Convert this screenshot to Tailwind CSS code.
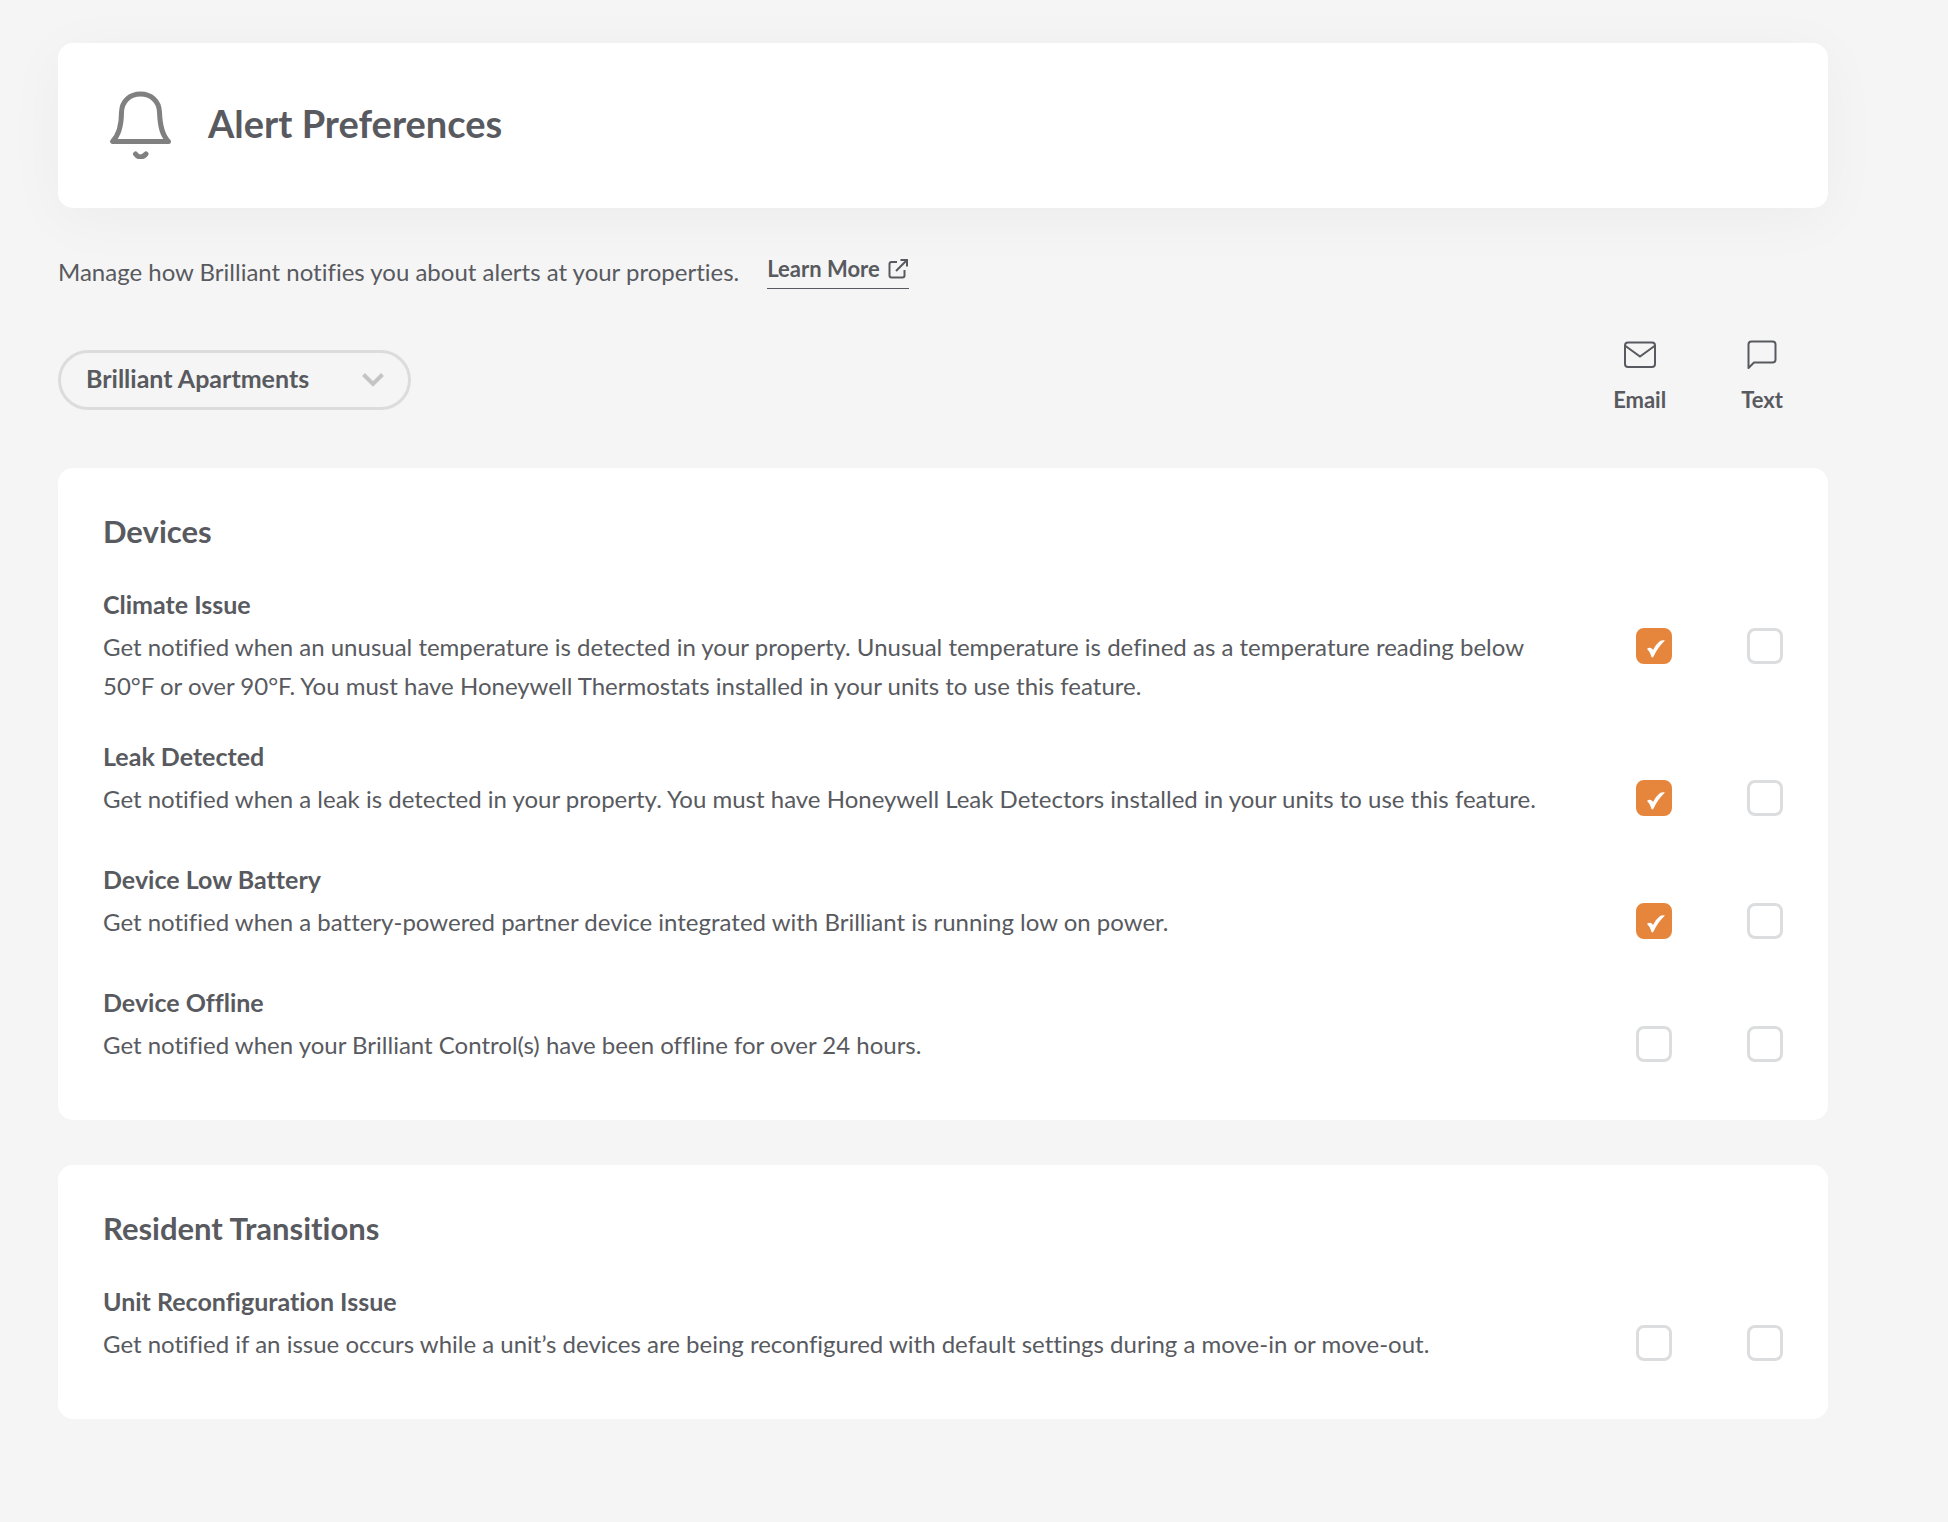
<!DOCTYPE html>
<html lang="en">

<head>
    <meta charset="UTF-8" />
    <meta name="viewport" content="width=device-width, initial-scale=1" />
    <title>Alert Preferences</title>
    <script src="https://cdn.jsdelivr.net/npm/@tailwindcss/browser@4"></script>
</head>

<body class="min-h-screen bg-[#f5f5f5] font-['Lato',sans-serif] text-[24px] leading-[39px] text-[#585a60] [font-variant-ligatures:none]">
    <main class="pt-[43px] pb-[103px] pl-[58px] pr-[120px]">
        <header class="flex items-center gap-[34px] rounded-[15px] bg-white px-[45px] pt-[45px] pb-[49px] shadow-[0_10px_60px_rgba(0,0,0,0.04)]">
            <svg class="w-[71px] h-[71px]" viewBox="0 0 71 71" fill="none" stroke="#808080" stroke-width="5" stroke-linecap="round" stroke-linejoin="round" aria-hidden="true">
                <path d="M9.500 53.500H65.500C59 47 57 38 56.500 24C56 13 48 6 37.500 6C27 6 19 13 18.500 24C18.500 38 16 47 9.500 53.500Z" />
                <path d="M32.500 66C35.500 70 39.500 70 43 66" />
            </svg>
            <h1 class="text-[38px] leading-[45px] font-bold">Alert Preferences</h1>
        </header>

        <div class="mt-[44px] flex items-center gap-[28px]">
            <p>Manage how Brilliant notifies you about alerts at your properties.</p>
            <a href="#" class="flex items-center gap-[8px] border-b border-[#585a60] pb-[6px] text-[22px] leading-[27px] font-bold">
                Learn More
                <svg class="w-[21px] h-[21px]" viewBox="0 0 21 21" fill="none" stroke="currentColor" stroke-width="2" aria-hidden="true">
                    <path d="M9 4H3.500Q1.500 4 1.500 6V17.500Q1.500 19.500 3.500 19.500H14.500Q16.500 19.500 16.500 17.500V12M12.500 2H19V8.500M19 2L8 13" />
                </svg>
            </a>
        </div>

        <div class="mt-[46px] flex items-end justify-between pr-[45px]">
            <div class="mb-[8px] grid items-center">
                <select aria-label="Property" class="col-start-1 row-start-1 h-[60px] w-[353px] appearance-none rounded-full border-3 border-[#dcdcdc] pb-[3px] pl-[25px] pr-[60px] text-[25px] font-bold">
                    <option>Brilliant Apartments</option>
                </select>
                <svg class="pointer-events-none col-start-1 row-start-1 mr-[27px] w-[22px] h-[14px] justify-self-end" viewBox="0 0 22 14" fill="none" stroke="#c4c4c4" stroke-width="4" aria-hidden="true">
                    <path d="M1.500 1.500L11 11L20.500 1.500" />
                </svg>
            </div>
            <div class="flex gap-[75px] text-[22px] leading-[36px] font-bold">
                <div class="flex flex-col items-center gap-[9px]">
                    <svg class="w-[36px] h-[36px]" viewBox="0 0 36 36" fill="none" stroke="currentColor" stroke-width="2" aria-hidden="true">
                        <rect x="3" y="5.500" width="30" height="24.500" rx="3" />
                        <path d="M3.500 9L18 19.500L32.500 9" />
                    </svg>
                    <span id="col-email">Email</span>
                </div>
                <div class="flex flex-col items-center gap-[9px]">
                    <svg class="w-[36px] h-[36px]" viewBox="0 0 36 36" fill="none" stroke="currentColor" stroke-width="2" stroke-linejoin="round" aria-hidden="true">
                        <path d="M4.500 31V7.500Q4.500 4.500 7.500 4.500H28.500Q31.500 4.500 31.500 7.500V22.500Q31.500 25.500 28.500 25.500H10Z" />
                    </svg>
                    <span id="col-text">Text</span>
                </div>
            </div>
        </div>

        <section class="mt-[50px] rounded-[15px] bg-white px-[45px] pt-[45px] pb-[46px]">
            <h2 class="text-[31px] leading-[36px] font-bold">Devices</h2>
            <div class="mt-[36px] flex flex-col gap-[32px]" data-alerts="devices"></div>
        </section>

        <section class="mt-[45px] rounded-[15px] bg-white px-[45px] pt-[45px] pb-[46px]">
            <h2 class="text-[31px] leading-[36px] font-bold">Resident Transitions</h2>
            <div class="mt-[36px] flex flex-col gap-[32px]" data-alerts="transitions"></div>
        </section>
    </main>

    <script>
        const alerts = {
            devices: [
                { id: 'climate', title: 'Climate Issue', email: true, text: false, body: 'Get notified when an unusual temperature is detected in your property. Unusual temperature is defined as a temperature reading below 50°F or over 90°F. You must have Honeywell Thermostats installed in your units to use this feature.' },
                { id: 'leak', title: 'Leak Detected', email: true, text: false, body: 'Get notified when a leak is detected in your property. You must have Honeywell Leak Detectors installed in your units to use this feature.' },
                { id: 'battery', title: 'Device Low Battery', email: true, text: false, body: 'Get notified when a battery-powered partner device integrated with Brilliant is running low on power.' },
                { id: 'offline', title: 'Device Offline', email: false, text: false, body: 'Get notified when your Brilliant Control(s) have been offline for over 24 hours.' }
            ],
            transitions: [
                { id: 'reconfig', title: 'Unit Reconfiguration Issue', email: false, text: false, body: 'Get notified if an issue occurs while a unit’s devices are being reconfigured with default settings during a move-in or move-out.' }
            ]
        };

        function checkbox(alert, channel) {
            return `
                <label class="mt-[1px] grid h-[36px] w-[36px] place-items-center">
                    <input type="checkbox" name="${alert.id}-${channel}" aria-labelledby="${alert.id}-title col-${channel}" ${alert[channel] ? 'checked' : ''}
                        class="peer col-start-1 row-start-1 h-[36px] w-[36px] appearance-none rounded-[8px] border-3 border-[#dcddde] bg-white checked:border-[#e6853c] checked:bg-[#e6853c]" />
                    <svg class="pointer-events-none invisible col-start-1 row-start-1 mt-[5px] ml-[3px] h-[18px] w-[18px] peer-checked:visible" viewBox="0 0 18 18" fill="#fff" aria-hidden="true">
                        <path d="M0 9Q2 7 4 8Q5.500 9 6 10Q9 4 13 1Q15 0 18 .5Q11 7 6.500 16.500Q5.500 18 4.500 17Q3 11.500 0 9Z" />
                    </svg>
                </label>`;
        }

        document.querySelectorAll('[data-alerts]').forEach((list) => {
            list.innerHTML = alerts[list.dataset.alerts].map((alert) => `
                <div class="min-h-[91px]">
                    <h3 id="${alert.id}-title" class="text-[25px] font-bold">${alert.title}</h3>
                    <div class="mt-[3px] grid grid-cols-[1fr_36px_36px] gap-x-[75px]">
                        <p>${alert.body}</p>
                        ${checkbox(alert, 'email')}
                        ${checkbox(alert, 'text')}
                    </div>
                </div>`).join('');
        });
    </script>
</body>

</html>
